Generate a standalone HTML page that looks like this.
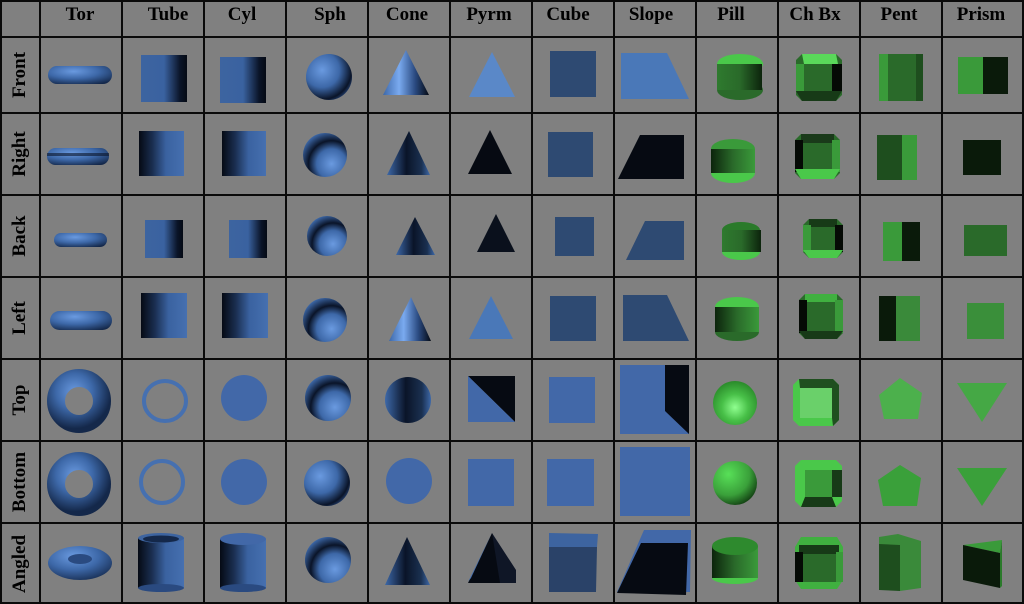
<!DOCTYPE html>
<html><head><meta charset="utf-8"><style>
html,body{margin:0;padding:0;background:#808080;}
svg{display:block}
text{font-family:"Liberation Serif",serif;font-weight:bold;fill:#000}
</style></head><body>
<svg width="1024" height="604" viewBox="0 0 1024 604" xmlns="http://www.w3.org/2000/svg">
<defs>
<linearGradient id="bh" x1="0" x2="1"><stop offset="0" stop-color="#3d64a0"/><stop offset="0.5" stop-color="#3a62a0"/><stop offset="0.85" stop-color="#0a1428"/><stop offset="1" stop-color="#050a14"/></linearGradient>
<linearGradient id="bhr" x1="0" x2="1"><stop offset="0" stop-color="#050a14"/><stop offset="0.3" stop-color="#1a2e50"/><stop offset="0.6" stop-color="#3a62a0"/><stop offset="1" stop-color="#4670b0"/></linearGradient>
<radialGradient id="sph" cx="0.35" cy="0.35" r="0.75"><stop offset="0" stop-color="#6a9ae0"/><stop offset="0.5" stop-color="#3d68a8"/><stop offset="0.85" stop-color="#0a1428"/><stop offset="1" stop-color="#2a4a80"/></radialGradient>
<radialGradient id="sph2" cx="0.65" cy="0.7" r="0.75"><stop offset="0" stop-color="#6a9ae0"/><stop offset="0.45" stop-color="#3d68a8"/><stop offset="0.7" stop-color="#0a1428"/><stop offset="1" stop-color="#3d68a8"/></radialGradient>
<radialGradient id="tor" cx="0.4" cy="0.3" r="0.8"><stop offset="0" stop-color="#6a9ae0"/><stop offset="0.5" stop-color="#3d68a8"/><stop offset="1" stop-color="#14284a"/></radialGradient>
<linearGradient id="cone" x1="0" x2="1"><stop offset="0" stop-color="#3d68a8"/><stop offset="0.35" stop-color="#7aaaf0"/><stop offset="0.7" stop-color="#2a4a80"/><stop offset="1" stop-color="#050a14"/></linearGradient>
<linearGradient id="coned" x1="0" x2="1"><stop offset="0" stop-color="#3d68a8"/><stop offset="0.45" stop-color="#0a1428"/><stop offset="0.8" stop-color="#1a3050"/><stop offset="1" stop-color="#3d68a8"/></linearGradient>
<linearGradient id="gp" x1="0" x2="1"><stop offset="0" stop-color="#2e7a2e"/><stop offset="0.5" stop-color="#2a6a2a"/><stop offset="1" stop-color="#0c240c"/></linearGradient>
<linearGradient id="gpr" x1="0" x2="1"><stop offset="0" stop-color="#0c240c"/><stop offset="0.5" stop-color="#2a6a2a"/><stop offset="1" stop-color="#3a9a3a"/></linearGradient>
<radialGradient id="gs" cx="0.5" cy="0.6" r="0.6"><stop offset="0" stop-color="#90ff90"/><stop offset="0.5" stop-color="#48c048"/><stop offset="1" stop-color="#2a8a2a"/></radialGradient>
<radialGradient id="gs2" cx="0.35" cy="0.3" r="0.8"><stop offset="0" stop-color="#58e058"/><stop offset="0.6" stop-color="#3aa03a"/><stop offset="1" stop-color="#0c300c"/></radialGradient>
</defs>
<rect width="1024" height="604" fill="#808080"/>

<g font-size="19" text-anchor="middle">
<text x="80" y="20">Tor</text><text x="168" y="20">Tube</text><text x="242" y="20">Cyl</text><text x="330" y="20">Sph</text><text x="407" y="20">Cone</text><text x="489" y="20">Pyrm</text><text x="568" y="20">Cube</text><text x="651" y="20">Slope</text><text x="731" y="20">Pill</text><text x="815" y="20">Ch Bx</text><text x="899" y="20">Pent</text><text x="981" y="20">Prism</text>
</g>
<g font-size="19" text-anchor="middle">
<text transform="translate(25,75) rotate(-90)">Front</text>
<text transform="translate(25,154) rotate(-90)">Right</text>
<text transform="translate(25,236) rotate(-90)">Back</text>
<text transform="translate(25,318) rotate(-90)">Left</text>
<text transform="translate(25,400) rotate(-90)">Top</text>
<text transform="translate(25,482) rotate(-90)">Bottom</text>
<text transform="translate(25,564) rotate(-90)">Angled</text>
</g>

<!-- TOR -->
<rect x="48" y="66" width="64" height="18" rx="9" fill="url(#tor)"/>
<rect x="47" y="148" width="62" height="17" rx="8.5" fill="url(#tor)"/>
<rect x="47" y="153" width="62" height="3" fill="#0a1428" opacity="0.6"/>
<rect x="54" y="233" width="53" height="14" rx="7" fill="url(#tor)"/>
<rect x="50" y="311" width="62" height="19" rx="9.5" fill="url(#tor)"/>
<ellipse cx="79" cy="401" rx="23" ry="23" fill="none" stroke="url(#tor)" stroke-width="18"/>
<ellipse cx="79" cy="484" rx="23" ry="23" fill="none" stroke="url(#tor)" stroke-width="18"/>
<ellipse cx="80" cy="563" rx="32" ry="17" fill="url(#tor)"/>
<ellipse cx="80" cy="559" rx="12" ry="5" fill="#2a4a80"/>

<!-- TUBE -->
<rect x="141" y="55" width="46" height="47" fill="url(#bh)"/>
<rect x="139" y="131" width="45" height="45" fill="url(#bhr)"/>
<rect x="145" y="220" width="38" height="38" fill="url(#bh)"/>
<rect x="141" y="293" width="46" height="45" fill="url(#bhr)"/>
<ellipse cx="165" cy="401" rx="21" ry="20" fill="none" stroke="#4670b0" stroke-width="4"/>
<ellipse cx="162" cy="482" rx="21" ry="21" fill="none" stroke="#4670b0" stroke-width="4"/>
<rect x="138" y="538" width="46" height="50" fill="url(#bhr)"/>
<ellipse cx="161" cy="588" rx="23" ry="4" fill="#2a4a80"/>
<ellipse cx="161" cy="538" rx="23" ry="5" fill="#3d64a0"/>
<ellipse cx="161" cy="539" rx="18" ry="3.5" fill="#14284a"/>

<!-- CYL -->
<rect x="220" y="57" width="46" height="46" fill="url(#bh)"/>
<rect x="222" y="131" width="44" height="45" fill="url(#bhr)"/>
<rect x="229" y="220" width="38" height="38" fill="url(#bh)"/>
<rect x="222" y="293" width="46" height="45" fill="url(#bhr)"/>
<circle cx="244" cy="398" r="23" fill="#4268a8"/>
<circle cx="244" cy="482" r="23" fill="#4268a8"/>
<rect x="220" y="539" width="46" height="49" fill="url(#bhr)"/>
<ellipse cx="243" cy="588" rx="23" ry="4" fill="#2a4a80"/>
<ellipse cx="243" cy="539" rx="23" ry="6" fill="#4268a8"/>

<!-- SPH -->
<circle cx="329" cy="77" r="23" fill="url(#sph)"/>
<circle cx="325" cy="155" r="22" fill="url(#sph2)"/>
<circle cx="327" cy="236" r="20" fill="url(#sph2)"/>
<circle cx="325" cy="320" r="22" fill="url(#sph2)"/>
<circle cx="328" cy="398" r="23" fill="url(#sph2)"/>
<circle cx="327" cy="483" r="23" fill="url(#sph)"/>
<circle cx="328" cy="560" r="23" fill="url(#sph2)"/>

<!-- CONE -->
<polygon points="406,50 383,95 429,95" fill="url(#cone)"/>
<polygon points="409,131 387,175 430,175" fill="url(#coned)"/>
<polygon points="415,217 396,255 435,255" fill="url(#coned)"/>
<polygon points="411,297 389,341 431,341" fill="url(#cone)"/>
<circle cx="408" cy="400" r="23" fill="url(#coned)"/>
<circle cx="409" cy="481" r="23" fill="#4268a8"/>
<polygon points="407,537 385,585 430,585" fill="url(#coned)"/>

<!-- PYRM -->
<polygon points="492,52 469,97 515,97" fill="#5a88c8"/>
<polygon points="490,130 468,174 512,174" fill="#060a12"/>
<polygon points="496,214 477,252 515,252" fill="#0a101c"/>
<polygon points="491,296 469,339 513,339" fill="#4a78b8"/>
<polygon points="468,376 515,376 515,422" fill="#060a12"/>
<polygon points="468,376 515,422 468,422" fill="#4268a8"/>
<rect x="468" y="459" width="46" height="47" fill="#4268a8"/>
<polygon points="492,533 468,583 516,583" fill="#060a12"/>
<polygon points="492,533 516,570 516,583 500,583" fill="#0f1626"/>
<polygon points="492,533 468,582 471,578" fill="#4670b0"/>

<!-- CUBE -->
<rect x="550" y="51" width="46" height="46" fill="#2e4a72"/>
<rect x="548" y="132" width="45" height="45" fill="#2e4a72"/>
<rect x="555" y="217" width="39" height="39" fill="#2e4a72"/>
<rect x="550" y="296" width="46" height="45" fill="#2e4a72"/>
<rect x="549" y="377" width="46" height="46" fill="#4268a8"/>
<rect x="547" y="459" width="47" height="47" fill="#4268a8"/>
<polygon points="549,533 598,534 597,547 549,547" fill="#3d64a0"/>
<polygon points="549,547 597,547 596,592 549,592" fill="#2a4268"/>

<!-- SLOPE -->
<polygon points="621,53 667,53 689,99 621,99" fill="#4a78b8"/>
<polygon points="640,135 684,135 684,179 618,179" fill="#060a12"/>
<polygon points="645,221 684,221 684,260 626,260" fill="#2e4a72"/>
<polygon points="623,295 667,295 689,341 623,341" fill="#2e4a72"/>
<rect x="620" y="365" width="69" height="69" fill="#4268a8"/>
<polygon points="665,365 689,365 689,434 665,411" fill="#060a12"/>
<rect x="620" y="447" width="70" height="69" fill="#4268a8"/>
<polygon points="617,592 644,530 691,530 690,592" fill="#4268a8"/>
<polygon points="617,593 641,543 688,543 686,595" fill="#060a12"/>

<!-- PILL -->
<g>
<ellipse cx="740" cy="64" rx="23" ry="10" fill="#4ac84a"/>
<ellipse cx="740" cy="90" rx="23" ry="10" fill="#2a6a2a"/>
<rect x="717" y="64" width="45" height="26" fill="url(#gp)"/>
</g>
<g>
<ellipse cx="733" cy="149" rx="22" ry="10" fill="#3a9a3a"/>
<ellipse cx="733" cy="173" rx="22" ry="10" fill="#4ac84a"/>
<rect x="711" y="149" width="44" height="24" fill="url(#gpr)"/>
</g>
<g>
<ellipse cx="741" cy="230" rx="19" ry="8" fill="#2a7a2a"/>
<ellipse cx="741" cy="252" rx="19" ry="8" fill="#4ac84a"/>
<rect x="722" y="230" width="39" height="22" fill="url(#gp)"/>
</g>
<g>
<ellipse cx="737" cy="307" rx="22" ry="10" fill="#4ac84a"/>
<ellipse cx="737" cy="332" rx="22" ry="9" fill="#2a6a2a"/>
<rect x="715" y="307" width="44" height="25" fill="url(#gpr)"/>
</g>
<circle cx="735" cy="403" r="22" fill="url(#gs)"/>
<circle cx="735" cy="483" r="22" fill="url(#gs2)"/>
<g>
<ellipse cx="735" cy="578" rx="23" ry="6" fill="#4ac84a"/>
<rect x="712" y="546" width="46" height="32" fill="url(#gpr)"/>
<ellipse cx="735" cy="546" rx="23" ry="9" fill="#2e8a2e"/>
</g>

<!-- CH BX -->
<g>
<polygon points="802,54 836,54 842,60 842,95 836,101 802,101 796,95 796,60" fill="#2a6a2a"/>
<polygon points="802,54 836,54 838,64 804,64" fill="#5ad85a"/>
<rect x="832" y="64" width="10" height="27" fill="#050a05"/>
<rect x="796" y="64" width="8" height="27" fill="#3a9a3a"/>
<polygon points="796,91 842,91 836,101 802,101" fill="#173a17"/>
</g>
<g>
<polygon points="801,134 834,134 840,140 840,173 834,179 801,179 795,173 795,140" fill="#2a6a2a"/>
<rect x="801" y="134" width="33" height="9" fill="#1a3a1a"/>
<rect x="795" y="140" width="8" height="32" fill="#050a05"/>
<rect x="832" y="140" width="8" height="32" fill="#3a9a3a"/>
<polygon points="795,169 840,169 834,179 801,179" fill="#4ac84a"/>
</g>
<g>
<polygon points="809,219 837,219 843,225 843,252 837,258 809,258 803,252 803,225" fill="#2a6a2a"/>
<rect x="809" y="219" width="28" height="8" fill="#173a17"/>
<rect x="803" y="225" width="8" height="27" fill="#3a9a3a"/>
<rect x="835" y="225" width="8" height="27" fill="#050a05"/>
<polygon points="803,250 843,250 837,258 809,258" fill="#4ac84a"/>
</g>
<g>
<polygon points="805,294 837,294 843,300 843,333 837,339 805,339 799,333 799,300" fill="#2a6a2a"/>
<rect x="805" y="294" width="32" height="8" fill="#40b040"/>
<rect x="799" y="300" width="8" height="33" fill="#050a05"/>
<rect x="835" y="300" width="8" height="33" fill="#3a9a3a"/>
<polygon points="799,331 843,331 837,339 805,339" fill="#173a17"/>
</g>
<g>
<polygon points="799,379 833,379 839,385 839,420 833,426 799,426 793,420 793,385" fill="#4ac84a"/>
<rect x="800" y="388" width="32" height="30" fill="#6ad06a"/>
<polygon points="799,379 833,379 839,385 839,420 833,426 832,418 832,388 800,388" fill="#173a17" opacity="0.85"/>
</g>
<g>
<polygon points="801,460 836,460 842,466 842,501 836,507 801,507 795,501 795,466" fill="#4ac84a"/>
<rect x="805" y="470" width="27" height="27" fill="#3a9a3a"/>
<rect x="832" y="470" width="10" height="27" fill="#173a17"/>
<polygon points="805,497 832,497 836,507 801,507" fill="#173a17"/>
</g>
<g>
<polygon points="801,537 837,537 843,547 843,580 837,589 801,589 795,580 795,547" fill="#40b040"/>
<rect x="799" y="545" width="40" height="9" fill="#173a17"/>
<rect x="795" y="552" width="8" height="30" fill="#050a05"/>
<rect x="803" y="554" width="33" height="28" fill="#2a6a2a"/>
<rect x="836" y="552" width="7" height="30" fill="#3a9a3a"/>
</g>

<!-- PENT -->
<rect x="879" y="54" width="44" height="47" fill="#2a6a2a"/>
<rect x="879" y="54" width="9" height="47" fill="#3a9a3a"/>
<rect x="916" y="54" width="7" height="47" fill="#1e4e1e"/>
<rect x="877" y="135" width="25" height="45" fill="#1e4e1e"/>
<rect x="902" y="135" width="15" height="45" fill="#3a9a3a"/>
<rect x="883" y="222" width="19" height="39" fill="#3a9a3a"/>
<rect x="902" y="222" width="18" height="39" fill="#0a1a0a"/>
<rect x="879" y="296" width="17" height="45" fill="#0a1a0a"/>
<rect x="896" y="296" width="24" height="45" fill="#3a8a3a"/>
<polygon points="900,378 922,393 918,419 884,419 879,395" fill="#4cb04c"/>
<polygon points="900,465 921,478 917,506 883,506 878,480" fill="#3aa03a"/>
<polygon points="879,537 898,534 921,541 921,588 900,591 879,588" fill="#3a8a3a"/>
<polygon points="879,544 900,545 900,591 879,590" fill="#1e4e1e"/>

<!-- PRISM -->
<rect x="958" y="57" width="25" height="37" fill="#3a9a3a"/>
<rect x="983" y="57" width="25" height="37" fill="#0a1a0a"/>
<rect x="963" y="140" width="38" height="35" fill="#0a1a0a"/>
<rect x="964" y="225" width="43" height="31" fill="#2a6a2a"/>
<rect x="967" y="303" width="37" height="36" fill="#3a8f3a"/>
<polygon points="957,383 1007,383 982,422" fill="#45a845"/>
<polygon points="957,468 1007,468 982,506" fill="#3aa03a"/>
<polygon points="963,545 1002,540 1000,553" fill="#3a9a3a"/>
<polygon points="963,545 1000,553 1000,588 963,580" fill="#0a1a0a"/>
<polygon points="1000,553 1002,540 1002,586 1000,588" fill="#2a7a2a"/>

<!-- GRID -->
<g stroke="#0a0a0a" stroke-width="2" fill="none">
<rect x="1" y="1" width="1022" height="602"/>
<line x1="0" y1="37" x2="1024" y2="37"/>
<line x1="0" y1="113" x2="1024" y2="113"/>
<line x1="0" y1="195" x2="1024" y2="195"/>
<line x1="0" y1="277" x2="1024" y2="277"/>
<line x1="0" y1="359" x2="1024" y2="359"/>
<line x1="0" y1="441" x2="1024" y2="441"/>
<line x1="0" y1="523" x2="1024" y2="523"/>
<line x1="40" y1="0" x2="40" y2="604"/>
<line x1="122" y1="0" x2="122" y2="604"/>
<line x1="204" y1="0" x2="204" y2="604"/>
<line x1="286" y1="0" x2="286" y2="604"/>
<line x1="368" y1="0" x2="368" y2="604"/>
<line x1="450" y1="0" x2="450" y2="604"/>
<line x1="532" y1="0" x2="532" y2="604"/>
<line x1="614" y1="0" x2="614" y2="604"/>
<line x1="696" y1="0" x2="696" y2="604"/>
<line x1="778" y1="0" x2="778" y2="604"/>
<line x1="860" y1="0" x2="860" y2="604"/>
<line x1="942" y1="0" x2="942" y2="604"/>
</g>
</svg>
</body></html>
